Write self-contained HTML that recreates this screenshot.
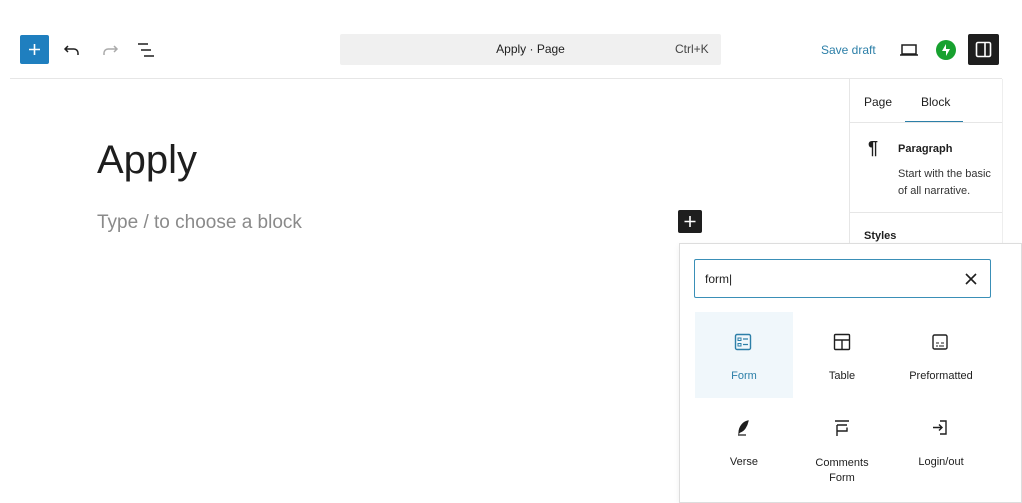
<!DOCTYPE html>
<html><head><meta charset="utf-8"><style>
*{box-sizing:border-box;margin:0;padding:0}
body{width:1022px;height:500px;background:#fff;font-family:"Liberation Sans",sans-serif;position:relative;overflow:hidden;color:#1e1e1e}
.abs{position:absolute}
.t{font-size:12px}
</style></head><body>
<!-- top bar -->
<div class="abs" style="left:10px;top:78px;width:992px;height:1px;background:#e6e6e6"></div>
<div class="abs" style="left:20px;top:35px;width:29px;height:29px;background:#1f7fbf;border-radius:2px"></div>
<svg class="abs" style="left:20px;top:35px" width="29" height="29"><path d="M14.5 9v11M9 14.5h11" stroke="#fff" stroke-width="1.6"/></svg>
<svg class="abs" style="left:62px;top:40px" width="20" height="20"><path d="M6 6l-3 3 3 3M3 9h9a4 4 0 0 1 4 4v2" fill="none" stroke="#1e1e1e" stroke-width="1.5"/></svg>
<svg class="abs" style="left:100px;top:40px" width="20" height="20"><path d="M14 6l3 3-3 3M17 9H8a4 4 0 0 0-4 4v2" fill="none" stroke="#aaa" stroke-width="1.5"/></svg>
<svg class="abs" style="left:136px;top:40px" width="22" height="20"><path d="M2 4h10M5 10h10M8 16h10" stroke="#1e1e1e" stroke-width="1.5"/></svg>
<div class="abs" style="left:340px;top:34px;width:381px;height:31px;background:#f0f0f0;border-radius:2px"></div>
<div class="abs t" style="left:340px;top:42px;width:381px;text-align:center;color:#1e1e1e">Apply · Page</div>
<div class="abs t" style="left:675px;top:42px;color:#444">Ctrl+K</div>
<div class="abs t" style="left:821px;top:43px;color:#2c7fa8">Save draft</div>
<svg class="abs" style="left:898px;top:40px" width="22" height="20"><path d="M4 5h14v9H4zM2 15h18" fill="none" stroke="#1e1e1e" stroke-width="1.5"/></svg>
<div class="abs" style="left:936px;top:40px;width:20px;height:20px;border-radius:50%;background:#17a12f"></div>
<svg class="abs" style="left:936px;top:40px" width="20" height="20"><path d="M10 4L6 11h4zM10 16l4-7h-4z" fill="#fff"/></svg>
<div class="abs" style="left:968px;top:34px;width:31px;height:31px;background:#1e1e1e;border-radius:2px"></div>
<svg class="abs" style="left:968px;top:34px" width="31" height="31"><rect x="8.5" y="8.5" width="14" height="14" rx="1.5" fill="none" stroke="#fff" stroke-width="1.6"/><path d="M17 8.5v14" stroke="#fff" stroke-width="1.6"/></svg>
<!-- sidebar -->
<div class="abs" style="left:849px;top:79px;width:1px;height:421px;background:#e6e6e6"></div>
<div class="abs" style="left:1002px;top:79px;width:1px;height:421px;background:#eee"></div>
<div class="abs t" style="left:864px;top:95px">Page</div>
<div class="abs t" style="left:921px;top:95px">Block</div>
<div class="abs" style="left:905px;top:121px;width:58px;height:2px;background:#2c7fa8"></div>
<div class="abs" style="left:850px;top:122px;width:152px;height:1px;background:#e6e6e6"></div>
<div class="abs" style="left:868px;top:138px;font-size:18px;font-weight:bold">¶</div>
<div class="abs" style="left:898px;top:143px;font-size:11px;font-weight:bold">Paragraph</div>
<div class="abs" style="left:898px;top:166px;font-size:11px;line-height:17px;color:#333;white-space:nowrap;width:104px;overflow:hidden">Start with the basic<br>of all narrative.</div>
<div class="abs" style="left:850px;top:212px;width:152px;height:1px;background:#e6e6e6"></div>
<div class="abs" style="left:864px;top:230px;font-size:11px;font-weight:bold">Styles</div>
<!-- editor -->
<div class="abs" style="left:97px;top:138px;font-size:40px;color:#1e1e1e">Apply</div>
<div class="abs" style="left:97px;top:212px;font-size:19px;color:#8a8a8a">Type / to choose a block</div>
<div class="abs" style="left:678px;top:210px;width:24px;height:23px;background:#1e1e1e;border-radius:2px"></div>
<svg class="abs" style="left:678px;top:210px" width="24" height="23"><path d="M12 6v11M6.5 11.5h11" stroke="#fff" stroke-width="1.6"/></svg>
<!-- popover -->
<div class="abs" style="left:679px;top:243px;width:343px;height:260px;background:#fff;border:1px solid #ddd;box-shadow:0 2px 6px rgba(0,0,0,.06)"></div>
<div class="abs" style="left:694px;top:259px;width:297px;height:39px;border:1.5px solid #3a8fb7;border-radius:2px"></div>
<div class="abs t" style="left:705px;top:272px">form|</div>
<svg class="abs" style="left:964px;top:272px" width="14" height="14"><path d="M2 2l10 10M12 2L2 12" stroke="#1e1e1e" stroke-width="1.6"/></svg>
<div class="abs" style="left:695px;top:312px;width:98px;height:86px;background:#f0f7fb"></div>
<svg class="abs" style="left:733px;top:332px" width="20" height="20"><rect x="2.5" y="2.5" width="15" height="15" rx="1.5" fill="none" stroke="#2c7fa8" stroke-width="1.4"/><rect x="5" y="6" width="3" height="2.5" fill="none" stroke="#2c7fa8"/><rect x="5" y="11.5" width="3" height="2.5" fill="none" stroke="#2c7fa8"/><path d="M10 7h5M10 12.5h5" stroke="#2c7fa8" stroke-width="1.2"/></svg>
<div class="abs t" style="left:695px;top:370px;width:98px;text-align:center;font-size:11px;color:#2c7fa8">Form</div>
<svg class="abs" style="left:832px;top:332px" width="20" height="20"><rect x="2.5" y="2.5" width="15" height="15" rx="1" fill="none" stroke="#1e1e1e" stroke-width="1.4"/><path d="M2.5 8h15M10 8v9.5" stroke="#1e1e1e" stroke-width="1.4"/></svg>
<div class="abs" style="left:793px;top:370px;width:98px;text-align:center;font-size:11px">Table</div>
<svg class="abs" style="left:930px;top:332px" width="20" height="20"><rect x="3" y="3" width="14" height="14" rx="1.5" fill="none" stroke="#1e1e1e" stroke-width="1.4"/><path d="M6 11h3M11 11h3M6 14h2M9 14h5" stroke="#1e1e1e" stroke-width="1.1"/></svg>
<div class="abs" style="left:891px;top:370px;width:100px;text-align:center;font-size:11px">Preformatted</div>
<svg class="abs" style="left:733px;top:418px" width="20" height="20"><path d="M6 15c0-6 4-11 9-12-1 5-4 10-8 11zM5 17h8" fill="#1e1e1e" stroke="#1e1e1e" stroke-width="1.2"/></svg>
<div class="abs" style="left:695px;top:456px;width:98px;text-align:center;font-size:11px">Verse</div>
<svg class="abs" style="left:832px;top:418px" width="20" height="20"><path d="M3 3h14M5 7h10M5 7v6h10V9.5M5 13v5" fill="none" stroke="#1e1e1e" stroke-width="1.4"/></svg>
<div class="abs" style="left:793px;top:456px;width:98px;text-align:center;font-size:11px;line-height:15px">Comments<br>Form</div>
<svg class="abs" style="left:930px;top:418px" width="20" height="20"><path d="M10 3h6v13h-6M3 9.5h9M9 6.5l3 3-3 3" fill="none" stroke="#1e1e1e" stroke-width="1.4"/></svg>
<div class="abs" style="left:891px;top:456px;width:100px;text-align:center;font-size:11px">Login/out</div>
</body></html>
